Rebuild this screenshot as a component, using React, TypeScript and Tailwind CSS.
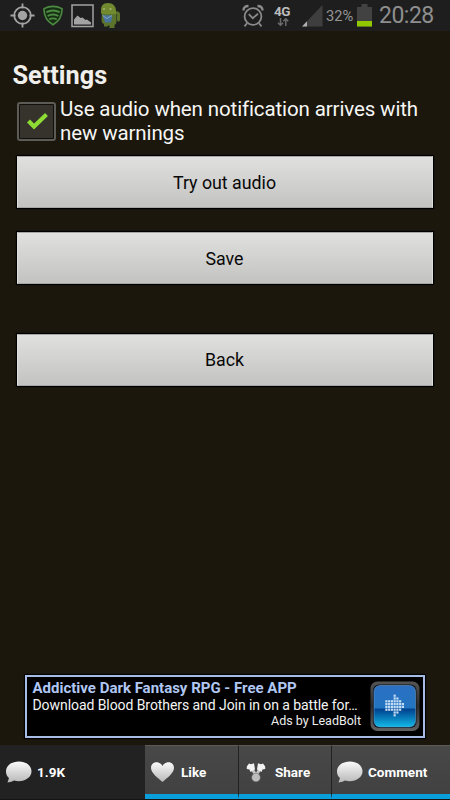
import type { ReactNode } from "react";

function StatusBar() {
  return (
    <header className="flex h-[31px] shrink-0 items-start bg-[#1e1e1e] text-[#8e8e8e]">
      <svg className="ml-[10px] mt-[3px] h-[25px] w-[25px]" viewBox="0 0 25 25" fill="none" stroke="#a3a3a3">
        <circle cx="12.5" cy="12.5" r="8.3" strokeWidth="1.8" />
        <circle cx="12.5" cy="12.5" r="4.7" fill="#a3a3a3" stroke="none" />
        <path d="M12.5 .5v5M12.5 19.5v5M.5 12.5h5M19.5 12.5h5" strokeWidth="1.8" />
      </svg>
      <svg className="ml-[8px] mt-[5px] h-[21px] w-[20px]" viewBox="0 0 20 21" fill="none">
        <path d="M1 3.6Q10-.8 19 3.6Q19.3 14.5 10 19.8Q.7 14.5 1 3.6Z" fill="#173014" stroke="#4d8b42" strokeWidth="1.6" />
        <path d="M3.4 7.2Q10 3.8 16.6 7.2M4.6 11Q10 8 15.4 11M6.3 14.3Q10 12.4 13.7 14.3" stroke="#4d8b42" strokeWidth="1.9" />
      </svg>
      <svg className="ml-[8px] mt-[4px] h-[24px] w-[23px]" viewBox="0 0 23 24">
        <rect x="1" y="1" width="21" height="21.5" fill="none" stroke="#a3a3a3" strokeWidth="1.5" />
        <path d="M3 20.500V15.500L6.500 11.500 9.500 14 11.500 13.500 14.500 16 16 15.500 20 18.500V20.500Z" fill="#a3a3a3" />
      </svg>
      <svg className="ml-[5px] mt-[2px] h-[27px] w-[22px]" viewBox="0 0 22 27">
        <path d="M16 11Q20.500 10 19.500 14V18" stroke="#5b732a" strokeWidth="3" strokeLinecap="round" fill="none" />
        <path d="M3 10H17.500V20Q17 23 15.500 23V26H10.500V23.500H9V24.500H5V22Q2.500 21 2.500 18Z" fill="#5b732a" />
        <path d="M2 10Q1 1 9 1Q16.500 1 17 9V12H2.500Z" fill="#71892f" />
        <circle cx="5" cy="7" r="1" fill="#aab57c" />
        <circle cx="11.5" cy="7" r="1" fill="#aab57c" />
        <path d="M3.500 13L13.500 13.500 12 20.500H6Z" fill="#49759c" />
        <path d="M3.500 13.500L8 16.500 13 13.500" stroke="#86a4bd" fill="none" />
      </svg>

      <svg className="ml-[121px] mt-[4px] h-[24px] w-[22px]" viewBox="0 0 22 24" fill="none" stroke="#8a8a8a">
        <circle cx="11" cy="12.5" r="8.4" strokeWidth="1.8" />
        <path d="M1.500 6.500Q1.500 2 6.500 2M15.500 2Q20.500 2 20.500 6.500" strokeWidth="2.4" />
        <path d="M6.800 10.200l4 4 5.200-4.500M5 19.200l-2.500 3.200M17 19.200l2.500 3.200" strokeWidth="1.8" />
      </svg>
      <div className="ml-[10px] mt-[5px] w-[19px]">
        <div className="h-[13px] text-[13.5px] font-bold leading-[13px] tracking-[-0.5px] text-[#bcbcbc]">4G</div>
        <svg className="ml-[3px] h-[9px] w-[12px]" viewBox="0 0 12 9" fill="none" stroke="#6b6b6b" strokeWidth="1.5">
          <path d="M3.500 0v7M1 4.800l2.500 2.500L6 4.800M8.800 8V1M6.300 3.200L8.800.8l2.500 2.400" />
        </svg>
      </div>
      <svg className="ml-[9px] mt-[5px] h-[22px] w-[21px]" viewBox="0 0 21 22">
        <path d="M0 21.500L20.500 0V21.500Z" fill="#3e3e3e" />
        <path d="M0 21.500L5 16.300V21.500Z" fill="#b0b0b0" />
      </svg>
      <span className="ml-[3px] mt-[6px] w-[29px] whitespace-nowrap text-[14.7px] leading-[20px] text-[#969696]">32%</span>
      <svg className="ml-[2px] mt-[4px] h-[23px] w-[15px]" viewBox="0 0 15 23">
        <path d="M0 3H4.500V0H10.500V3H15V22.500H0Z" fill="#424242" />
        <path d="M0 17H15V22.500H0Z" fill="#91c900" />
      </svg>
      <span className="ml-[7px] mt-[2px] whitespace-nowrap text-[23px] leading-[27px] tracking-[-0.5px]">20:28</span>
    </header>
  );
}

function MenuButton({ children, className }: { children: ReactNode; className: string }) {
  return (
    <button
      type="button"
      className={`mx-[17px] block h-[52px] shrink-0 border border-x-[#dededb] border-t-[#a7a5a1] border-b-[#a6a6a4] bg-linear-to-b from-[#e0e0de] to-[#c3c3c1] pr-[1px] text-center text-[17.8px] leading-[50px] text-[#080808] shadow-[0_0_1px_1px_#000] ${className}`}
    >
      {children}
    </button>
  );
}

function Bubble() {
  return (
    <svg className="h-[23px] w-[27px] shrink-0" viewBox="0 0 27 23">
      <defs>
        <linearGradient id="bubble" x2="0" y2="1">
          <stop stopColor="#fafafa" />
          <stop offset="1" stopColor="#b8b8b8" />
        </linearGradient>
      </defs>
      <path d="M14 .5C6.500 .5 1 4.500 1 10.500Q1 14.500 4 17L2.500 21.500Q7 21 9 19.500C18 22 26.500 17 26.500 10.500C26.500 4.500 21 .5 14 .5Z" fill="url(#bubble)" />
    </svg>
  );
}

/** Pixelated arrow: dots per column, centred vertically. */
const arrowColumns = [4, 4, 4, 8, 6, 4, 2];

function AdBanner() {
  return (
    <aside className="mx-[25px] mt-[289px] flex h-[63px] shrink-0 border-2 border-[#a6bce5] bg-black shadow-[0_0_1px_1px_#000]">
      <div className="w-[338px] shrink-0 whitespace-nowrap pl-[5.5px] pt-[2px]">
        <div className="text-[15px] font-bold leading-[18px] text-[#b0c7f3]">Addictive Dark Fantasy RPG - Free APP</div>
        <div className="text-[14px] leading-[17px] tracking-[-0.07px] text-[#f4f4f4]">
          Download Blood Brothers and Join in on a battle for…
        </div>
        <div className="pr-[4px] text-right text-[12.5px] leading-[13px] text-[#ededed]">Ads by LeadBolt</div>
      </div>
      <svg className="ml-[5px] mt-[4px] h-[52px] w-[51px] shrink-0" viewBox="0 0 51 52">
        <defs>
          <linearGradient id="glass" x2="0" y2="1">
            <stop stopColor="#2c70c4" />
            <stop offset=".53" stopColor="#2274c0" />
            <stop offset=".58" stopColor="#00438f" />
            <stop offset="1" stopColor="#12b9e8" />
          </linearGradient>
          <linearGradient id="bezel" x2="0" y2="1">
            <stop stopColor="#555" />
            <stop offset=".5" stopColor="#2c2c2c" />
            <stop offset="1" stopColor="#626262" />
          </linearGradient>
        </defs>
        <rect x=".5" y=".5" width="49" height="49.5" rx="7" fill="url(#bezel)" />
        <rect x="3" y="3.5" width="43.500" height="43.500" rx="6" fill="#0b1420" />
        <rect x="4" y="4.500" width="41.500" height="41.500" rx="6" fill="url(#glass)" stroke="#79a5d0" strokeOpacity=".5" />
        <g fill="#c4dcf6">
          {arrowColumns.map((count, col) =>
            Array.from({ length: count }, (_, row) => (
              <rect key={`${col}-${row}`} x={15.3 + col * 2.75} y={24.8 - count * 1.4 + row * 2.8} width="2.2" height="2.2" />
            )),
          )}
        </g>
      </svg>
    </aside>
  );
}

function Action({ label, icon, className }: { label: string; icon: ReactNode; className: string }) {
  return (
    <button
      type="button"
      className={`flex h-[54px] items-center border-b-[5px] border-t border-b-[#0a9fdb] border-t-[#5b5b57] bg-linear-to-b from-[#484848] to-[#414141] pt-[4px] text-[13.5px] font-bold text-white ${className}`}
    >
      {icon}
      <span>{label}</span>
    </button>
  );
}

function SocialBar() {
  return (
    <footer className="mt-[7px] flex h-[55px] shrink-0 bg-[#151515]">
      <div className="flex h-[54px] w-[145px] items-center gap-[5px] bg-[#222] pl-[5px] pt-[1px] text-[13.5px] font-bold text-white">
        <Bubble />
        <span>1.9K</span>
      </div>
      <Action
        label="Like"
        className="w-[93px] gap-[6px] pl-[5px]"
        icon={
          <svg className="h-[22px] w-[25px]" viewBox="0 0 25 22">
            <path d="M12.500 5C10-.2 1-.2 1 7C1 12 8 17 12.500 21C17 17 24 12 24 7C24-.2 15-.2 12.500 5Z" fill="url(#bubble)" />
          </svg>
        }
      />
      <Action
        label="Share"
        className="w-[93px] gap-[9px] border-l border-l-[#222] pl-[7px]"
        icon={
          <svg className="h-[22px] w-[20px]" viewBox="0 0 20 22">
            <path d="M6 8L9.500 13.500M14 8L10.500 13.500" stroke="#c4c4c4" strokeWidth="3" />
            <path d="M.8 5.500L3 2.500 5 3.300 8 2.300 9 8.500 7 9.500 4.500 11 3.500 8.500 .8 8ZM19.200 5.500L17 2.500 15 3.300 12 2.300 11 8.500 13 9.500 15.500 11 16.500 8.500 19.200 8Z" fill="#f2f2f2" />
            <circle cx="10" cy="16.500" r="4.300" fill="#bdbdbd" stroke="#6b6b6b" strokeWidth=".6" />
          </svg>
        }
      />
      <Action label="Comment" className="w-[119px] gap-[5px] border-l border-l-[#222] pl-[4px]" icon={<Bubble />} />
    </footer>
  );
}

export default function App() {
  return (
    <div className="flex h-[800px] w-[450px] flex-col overflow-hidden bg-[#1b170d] font-[Roboto,sans-serif]">
      <StatusBar />
      <h1 className="ml-[12.5px] mt-[29px] h-[32px] shrink-0 text-[25.3px] font-bold leading-[32px] text-[#f0efec]">Settings</h1>
      <label className="ml-[17px] mt-[6px] flex h-[48px] shrink-0">
        <span className="mt-[4px] flex h-[39px] w-[39px] shrink-0 items-center justify-center rounded-[3px] border-2 border-[#5d5b55] bg-[#35332b] shadow-[inset_0_0_0_1px_#100f0b]">
          <svg className="ml-[2px] h-[19px] w-[23px]" viewBox="0 0 23 19" fill="none">
            <path d="M2.500 9l5.500 5.500L20.500 2.500" stroke="#8edb35" strokeWidth="4.2" />
          </svg>
        </span>
        <span className="-mt-px ml-[4px] whitespace-nowrap text-[20.5px] leading-[24px] tracking-[-0.12px] text-[#f6f6f4]">
          Use audio when notification arrives with
          <br />
          new warnings
        </span>
      </label>
      <MenuButton className="mt-[10px] pt-[1px]">Try out audio</MenuButton>
      <MenuButton className="mt-[24px] pt-[1px]">Save</MenuButton>
      <MenuButton className="mt-[50px]">Back</MenuButton>
      <AdBanner />
      <SocialBar />
    </div>
  );
}
